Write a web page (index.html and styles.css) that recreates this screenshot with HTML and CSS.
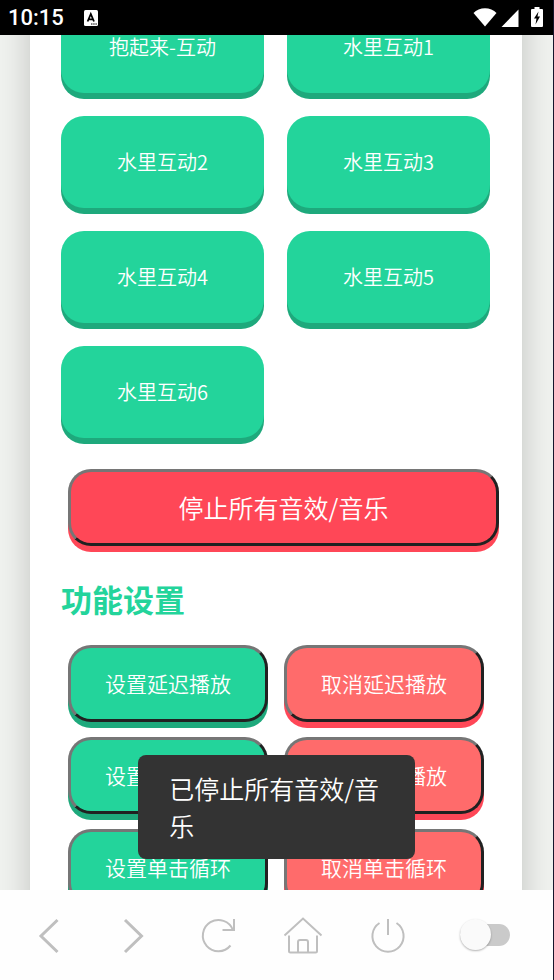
FILE: index.html
```html
<!DOCTYPE html>
<html lang="zh-CN">
<head>
<meta charset="utf-8">
<meta name="viewport" content="width=device-width, initial-scale=1">
<title>功能设置</title>
<link rel="stylesheet" href="styles.css">
</head>
<body>
<header class="status">
  <span class="time">10:15</span>
  <svg class="status-app" width="14" height="16" viewBox="0 0 14 16" aria-hidden="true">
    <rect width="14" height="16" rx="1.5" fill="#fff"/>
    <path d="M3.600 11.500 6.800 4l3.200 7.500M4.800 9.300h4" fill="none" stroke="#000" stroke-width="1.800"/>
    <path d="M7 14h6" stroke="#000" stroke-dasharray="1.500 .7"/>
  </svg>
  <span class="status-icons">
    <svg width="24" height="22" viewBox="0 0 24 22" aria-hidden="true"><path d="M12 19.500.5 6C6-.5 18-.5 23.500 6z" fill="#fff"/></svg>
    <svg width="18" height="22" viewBox="0 0 18 22" aria-hidden="true"><path d="M.5 20 17.500 2.500V20z" fill="#fff"/></svg>
    <svg width="12" height="22" viewBox="0 0 12 22" aria-hidden="true"><path d="M3.500 0h5v2H11a1 1 0 0 1 1 1V19a1 1 0 0 1-1 1H1a1 1 0 0 1-1-1V3a1 1 0 0 1 1-1h2.500z" fill="#fff"/><path d="M7.500 4.500 3 11.500h2.500L4.500 17.500l4.500-8H6.500z" fill="#000"/></svg>
  </span>
</header>

<main class="viewport">
  <section class="card">
    <div class="sounds">
      <button class="sound" type="button">抱起来-互动</button>
      <button class="sound" type="button">水里互动1</button>
      <button class="sound" type="button">水里互动2</button>
      <button class="sound" type="button">水里互动3</button>
      <button class="sound" type="button">水里互动4</button>
      <button class="sound" type="button">水里互动5</button>
      <button class="sound" type="button">水里互动6</button>
    </div>
    <button class="action stop" type="button">停止所有音效/音乐</button>
    <h2 class="title">功能设置</h2>
    <div class="settings">
      <button class="action" type="button">设置延迟播放</button>
      <button class="action cancel" type="button">取消延迟播放</button>
      <button class="action" type="button">设置循环播放</button>
      <button class="action cancel" type="button">取消循环播放</button>
      <button class="action" type="button">设置单击循环</button>
      <button class="action cancel" type="button">取消单击循环</button>
    </div>
  </section>
</main>

<div class="toast" role="status">已停止所有音效/音乐</div>

<nav class="toolbar">
  <button class="tool" type="button" aria-label="后退">
    <svg viewBox="0 0 40 40"><path d="M28.500 5 12 21l16.500 16" stroke-width="3"/></svg>
  </button>
  <button class="tool" type="button" aria-label="前进">
    <svg viewBox="0 0 40 40"><path d="M11 5 27.500 21 11 37" stroke-width="3"/></svg>
  </button>
  <button class="tool" type="button" aria-label="刷新">
    <svg viewBox="0 0 40 40"><path d="M31.500 30.500A15.600 15.600 0 1 1 34 15M35 4v11H23.500"/></svg>
  </button>
  <button class="tool" type="button" aria-label="主页">
    <svg viewBox="0 0 40 40"><path d="M1.500 20.500 20 3.500l18.500 17M6 20.500V36q0 1.500 1.500 1.500h25q1.500 0 1.500-1.500V20.500M15 37V27q0-2 2-2h6q2 0 2 2v10"/></svg>
  </button>
  <button class="tool" type="button" aria-label="退出">
    <svg viewBox="0 0 40 40"><path d="M11.500 8A15.600 15.600 0 1 0 28.500 8M20 4v16"/></svg>
  </button>
  <input class="switch" type="checkbox" aria-label="开关">
</nav>
</body>
</html>
```
FILE: styles.css
```css
* {
  box-sizing: border-box;
}

body {
  margin: 0;
  height: 100vh;
  display: flex;
  flex-direction: column;
  position: relative;
  overflow: hidden;
  border-right: 1px solid #16162c;
  background: #f0f2ef;
  font-family: "Noto Sans CJK SC", sans-serif;
  font-weight: 350;
}

button {
  margin: 0;
  padding: 0;
  font-family: inherit;
  font-weight: inherit;
  color: #fff;
  cursor: pointer;
}

.status {
  flex: none;
  height: 35px;
  padding: 0 10px 0 8px;
  display: flex;
  align-items: center;
  background: #000;
  color: #fff;
}

.time {
  font: 500 22px/35px Roboto, sans-serif;
}

.status-app {
  margin-left: 20px;
}

.status-icons {
  margin-left: auto;
  display: flex;
}

.status-icons svg:nth-child(2) {
  margin: 0 12px 0 4px;
}

.viewport {
  flex: 1;
  min-height: 0;
  overflow: hidden;
}

/* The page is scrolled so that the first row sits under the status bar. */
.card {
  margin: -34px 31px 0 30px;
  padding: 0 32px 31px 31px;
  background: #fff;
  box-shadow: 0 0 31px rgba(0, 0, 0, 0.2);
}

.sounds {
  display: grid;
  grid-template-columns: 1fr 1fr;
  gap: 23px;
}

.sound,
.action {
  padding-bottom: 2px;
  border-radius: 23px;
  background: #23d49b;
  box-shadow: 0 6px 0 #1ea97c;
}

.sound {
  height: 92px;
  border: 0;
  font-size: 20px;
}

.action {
  height: 77px;
  border: 3px solid;
  border-color: #767676 #212121 #212121 #767676;
  font-size: 21px;
}

.stop {
  display: block;
  width: calc(100% + 2px);
  margin: 31px 0 0 7px;
  background: #ff4757;
  box-shadow: 0 6px 0 #ff4757;
  font-size: 25px;
}

.title {
  margin: 30px 0 23px;
  font-size: 31px;
  line-height: 46px;
  font-weight: 700;
  color: #23d49b;
}

.settings {
  margin: 0 6px 0 7px;
  display: grid;
  grid-template-columns: 1fr 1fr;
  gap: 15px 16px;
}

.cancel {
  background: #ff6b6b;
  box-shadow: 0 6px 0 #ff4757;
}

.toast {
  position: absolute;
  left: 25%;
  bottom: 121px;
  width: 50%;
  padding: 15px 31px;
  border-radius: 8px;
  background: #333;
  color: #fff;
  font-size: 25px;
  line-height: 37px;
  word-break: break-all;
}

.toolbar {
  flex: none;
  height: 90px;
  padding: 0 13px 0 7px;
  display: grid;
  grid-template-columns: repeat(5, 10fr) 13fr;
  align-items: center;
  justify-items: center;
  background: #fefefe;
}

.tool {
  display: flex;
  border: 0;
  background: none;
}

.tool svg {
  width: 40px;
  height: 40px;
  fill: none;
  stroke: #bfbfbf;
  stroke-width: 2;
}

.switch {
  appearance: none;
  position: relative;
  width: 50px;
  height: 22px;
  margin: 0;
  border-radius: 11px;
  background: #cacaca;
}

.switch::before {
  content: "";
  position: absolute;
  left: 0;
  top: -5px;
  width: 31px;
  height: 31px;
  border-radius: 50%;
  background: #fafafa;
  box-shadow: 0 1px 2px rgba(0, 0, 0, 0.3);
}
```
